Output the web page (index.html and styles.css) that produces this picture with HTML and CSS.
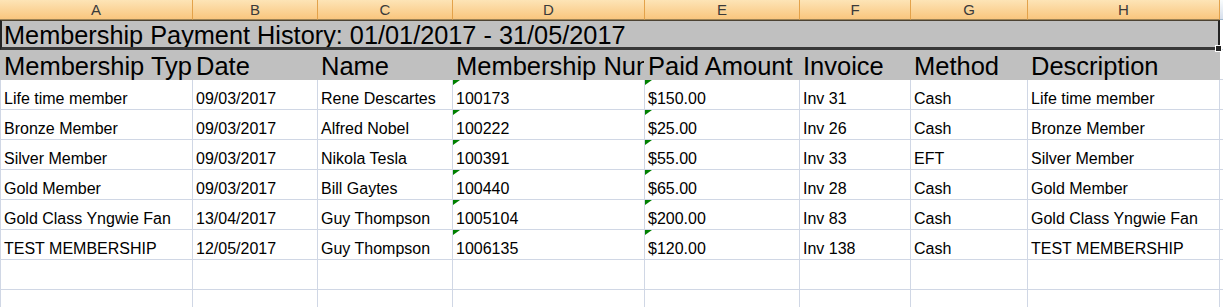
FILE: index.html
```html
<!DOCTYPE html>
<html>
<head>
<meta charset="utf-8">
<link rel="stylesheet" href="styles.css">
</head>
<body>
<div class="sheet">
  <div class="grid">
    <div class="ch first">A</div><div class="ch">B</div><div class="ch">C</div><div class="ch">D</div><div class="ch">E</div><div class="ch">F</div><div class="ch">G</div><div class="ch">H</div><div class="ch plain"></div>

    <div class="title">Membership Payment History: 01/01/2017 - 31/05/2017</div><div class="c extra"></div>

    <div class="h first">Membership Type</div><div class="h">Date</div><div class="h">Name</div><div class="h">Membership Number</div><div class="h">Paid Amount</div><div class="h">Invoice</div><div class="h">Method</div><div class="h">Description</div><div class="c extra"></div>

    <div class="c first">Life time member</div><div class="c">09/03/2017</div><div class="c">Rene Descartes</div><div class="c tri">100173</div><div class="c tri">$150.00</div><div class="c">Inv 31</div><div class="c">Cash</div><div class="c">Life time member</div><div class="c extra"></div>

    <div class="c first">Bronze Member</div><div class="c">09/03/2017</div><div class="c">Alfred Nobel</div><div class="c tri">100222</div><div class="c tri">$25.00</div><div class="c">Inv 26</div><div class="c">Cash</div><div class="c">Bronze Member</div><div class="c extra"></div>

    <div class="c first">Silver Member</div><div class="c">09/03/2017</div><div class="c">Nikola Tesla</div><div class="c tri">100391</div><div class="c tri">$55.00</div><div class="c">Inv 33</div><div class="c">EFT</div><div class="c">Silver Member</div><div class="c extra"></div>

    <div class="c first">Gold Member</div><div class="c">09/03/2017</div><div class="c">Bill Gaytes</div><div class="c tri">100440</div><div class="c tri">$65.00</div><div class="c">Inv 28</div><div class="c">Cash</div><div class="c">Gold Member</div><div class="c extra"></div>

    <div class="c first">Gold Class Yngwie Fan</div><div class="c">13/04/2017</div><div class="c">Guy Thompson</div><div class="c tri">1005104</div><div class="c tri">$200.00</div><div class="c">Inv 83</div><div class="c">Cash</div><div class="c">Gold Class Yngwie Fan</div><div class="c extra"></div>

    <div class="c first">TEST MEMBERSHIP</div><div class="c">12/05/2017</div><div class="c">Guy Thompson</div><div class="c tri">1006135</div><div class="c tri">$120.00</div><div class="c">Inv 138</div><div class="c">Cash</div><div class="c">TEST MEMBERSHIP</div><div class="c extra"></div>

    <div class="c first"></div><div class="c"></div><div class="c"></div><div class="c"></div><div class="c"></div><div class="c"></div><div class="c"></div><div class="c"></div><div class="c extra"></div>

    <div class="c first"></div><div class="c"></div><div class="c"></div><div class="c"></div><div class="c"></div><div class="c"></div><div class="c"></div><div class="c"></div><div class="c extra"></div>
  </div>
  <div class="handle"></div>
</div>
</body>
</html>
```

FILE: styles.css
```css
html, body {
  margin: 0;
  padding: 0;
  background: #ffffff;
  overflow: hidden;
}

.sheet {
  position: relative;
  width: 1223px;
  height: 307px;
  overflow: hidden;
  font-family: "Liberation Sans", Arial, sans-serif;
  color: #000;
}

.grid {
  display: grid;
  grid-template-columns: 193px 125px 135px 192px 155px 111px 117px 192px 1fr;
}

.ch {
  height: 20px;
  box-sizing: border-box;
  background: linear-gradient(#fde4b6, #f9c67e);
  border-right: 1px solid #e3a24a;
  border-bottom: 1px solid #9c8356;
  font-size: 15px;
  line-height: 19px;
  text-align: center;
  color: #3a3a3a;
}

.ch.plain {
  background: linear-gradient(#f9fcfd, #d6dfec);
  border-right: none;
  border-bottom-color: #9eb6ce;
}

.title {
  grid-column: 1 / 9;
  height: 30px;
  box-sizing: border-box;
  background: #c0c0c0;
  border-left: 2px solid #242424;
  border-right: 2px solid #242424;
  border-top: 1px solid #4c4232;
  border-bottom: 3px solid #383838;
  padding-left: 2px;
  font-size: 25.3px;
  line-height: 28px;
  white-space: nowrap;
  overflow: hidden;
}

.h {
  height: 30px;
  box-sizing: border-box;
  background: #c0c0c0;
  padding: 2px 0 0 3px;
  font-size: 25.5px;
  line-height: 28px;
  white-space: nowrap;
  overflow: hidden;
  border-right: 1px solid #c0c0c0;
}

.h.first {
  border-left: 1px solid #c0c0c0;
}

.c {
  position: relative;
  height: 30px;
  box-sizing: border-box;
  border-right: 1px solid #d0d7e5;
  border-bottom: 1px solid #d0d7e5;
  padding: 10px 0 0 3px;
  font-size: 16px;
  line-height: 18px;
  white-space: nowrap;
  overflow: hidden;
}

.c.first {
  border-left: 1px solid #d0d7e5;
}

.c.extra {
  border-right: none;
}

.tri::before {
  content: "";
  position: absolute;
  left: 0;
  top: 0;
  width: 0;
  height: 0;
  border-top: 5px solid #008000;
  border-right: 7px solid transparent;
}

.handle {
  position: absolute;
  left: 1215px;
  top: 45px;
  width: 5px;
  height: 5px;
  background: #222222;
  border: 1px solid #ffffff;
}
```
